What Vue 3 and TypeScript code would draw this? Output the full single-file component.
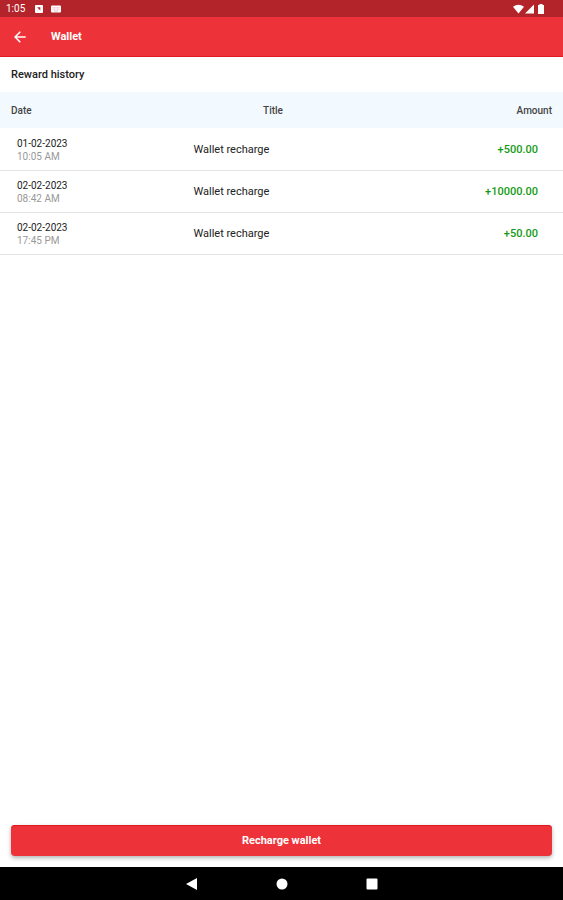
<script setup lang="ts">
interface Entry {
  date: string
  time: string
  title: string
  amount: string
}

const entries: Entry[] = [
  { date: '01-02-2023', time: '10:05 AM', title: 'Wallet recharge', amount: '+500.00' },
  { date: '02-02-2023', time: '08:42 AM', title: 'Wallet recharge', amount: '+10000.00' },
  { date: '02-02-2023', time: '17:45 PM', title: 'Wallet recharge', amount: '+50.00' },
]
</script>

<template>
  <div class="screen">
    <div class="status">
      <span class="clock">1:05</span>
      <svg class="notice" width="8" height="8" viewBox="0 0 8 8" aria-hidden="true">
        <rect width="8" height="8" rx="1" fill="#fff" />
        <path d="M2.5 2.2h2.8v3.3L2.5 2.8z" fill="#b3242a" />
      </svg>
      <svg class="notice" width="10" height="8" viewBox="0 0 10 8" aria-hidden="true">
        <rect y="0.5" width="10" height="7" rx="1" fill="#fff" />
        <path d="M1.5 2.7h7M1.5 4.2h7" stroke="#e5a9ac" stroke-width="0.8" stroke-dasharray="1 0.5" />
        <path d="M3 6h4" stroke="#e5a9ac" stroke-width="0.7" />
      </svg>
      <svg class="signals" width="32" height="10" viewBox="0 0 32 10" aria-hidden="true">
        <path d="M0 2.8Q5.5-1.4 11 2.8L5.5 9.5z" fill="#fff" />
        <path d="M12 9.500L21 0.500v9z" fill="#fff" />
        <path d="M25 1h1.500V0h3v1H31v9h-6z" fill="#fff" />
      </svg>
    </div>

    <header class="bar">
      <button class="back" type="button" aria-label="Back">
        <svg width="12" height="12" viewBox="0 0 12 12" fill="none" stroke="#fff" stroke-width="1.5">
          <path d="M11.700 6H1.200M6.300 0.700L1 6l5.300 5.300" />
        </svg>
      </button>
      <h1>Wallet</h1>
    </header>

    <main>
      <h2>Reward history</h2>
      <table>
        <thead>
          <tr>
            <th class="date">Date</th>
            <th class="title">Title</th>
            <th class="amount">Amount</th>
          </tr>
        </thead>
        <tbody>
          <tr v-for="(entry, i) in entries" :key="i">
            <td class="date">
              <div>{{ entry.date }}</div>
              <div class="time">{{ entry.time }}</div>
            </td>
            <td class="title">{{ entry.title }}</td>
            <td class="amount">{{ entry.amount }}</td>
          </tr>
        </tbody>
      </table>
    </main>

    <div class="action">
      <button class="recharge" type="button">Recharge wallet</button>
    </div>

    <nav class="system">
      <button type="button" aria-label="System back">
        <svg width="12" height="12" viewBox="0 0 12 12"><path d="M0 6L11 0v12z" fill="#fff" /></svg>
      </button>
      <button type="button" aria-label="Home">
        <svg width="12" height="12" viewBox="0 0 12 12"><circle cx="6" cy="6" r="5.500" fill="#fff" /></svg>
      </button>
      <button type="button" aria-label="Recent apps">
        <svg width="12" height="12" viewBox="0 0 12 12"><rect x="0.500" y="0.500" width="11" height="11" rx="1" fill="#fff" /></svg>
      </button>
    </nav>
  </div>
</template>

<style>
body {
  margin: 0;
  background: #fff;
}
</style>

<style scoped>
.screen {
  display: flex;
  flex-direction: column;
  min-height: 100vh;
  font-family: Roboto, "Liberation Sans", sans-serif;
  font-size: 11px;
  line-height: 13px;
  color: #222;
}
button {
  padding: 0;
  border: 0;
  background: none;
  font: inherit;
  cursor: pointer;
}
svg {
  display: block;
}
.status {
  display: flex;
  align-items: center;
  height: 17px;
  padding: 0 18px 0 6px;
  background: #b3242a;
  color: #fff;
  font-size: 10px;
}
.clock {
  width: 29px;
}
.notice {
  margin-right: 8px;
}
.signals {
  margin-left: auto;
}
.bar {
  display: flex;
  align-items: center;
  gap: 25px;
  height: 39px;
  padding: 0 14px;
  border-bottom: 1px solid #de1a20;
  background: #ee3239;
  color: #fff;
}
h1,
h2 {
  margin: 0;
  font-size: 11px;
}
h1 {
  font-weight: 700;
}
h2 {
  padding: 11px;
  font-weight: 500;
}
main {
  flex: 1;
}
table {
  width: 100%;
  table-layout: fixed;
  border-collapse: collapse;
}
th,
td {
  box-sizing: border-box;
}
th {
  height: 36px;
  padding: 0 11px;
  background: #f3faff;
  color: #444;
  font-size: 10px;
  font-weight: 500;
  text-align: left;
}
th.date {
  width: 34%;
}
th.title {
  width: 29%;
  padding: 0;
  text-align: center;
}
.amount,
th.amount {
  text-align: right;
}
td {
  height: 42px;
  padding: 0;
}
tbody tr {
  box-shadow: 0 1px 0 #e4e4e4;
}
td.date {
  padding: 2px 0 0 17px;
  font-size: 10px;
}
.time {
  color: #999;
}
td.title {
  padding-left: 2px;
}
td.amount {
  padding-right: 25px;
  color: #159a15;
  font-weight: 500;
}
.action {
  padding: 11px;
}
.recharge {
  width: 100%;
  height: 31px;
  border-radius: 4px;
  background: #ee3239;
  box-shadow: 0 2px 4px rgba(0, 0, 0, 0.3), inset 0 1px 0 #de1a20;
  color: #fff;
  font-weight: 700;
}
.system {
  display: flex;
  justify-content: center;
  align-items: center;
  gap: 78px;
  height: 33px;
  background: #000;
}
</style>
